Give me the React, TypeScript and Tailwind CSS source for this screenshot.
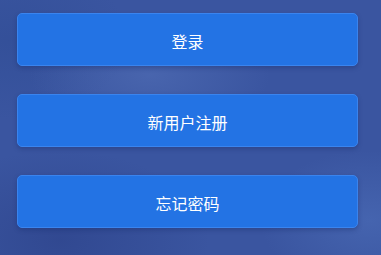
import React from "react";

export default function App() {
  const labels = ["登录", "新用户注册", "忘记密码"];
  return (
    <div className="w-[381px] h-[255px] overflow-hidden flex flex-col gap-[28px] pl-[17px] pr-[23px] pt-[13px] bg-[#3a55a0] bg-[radial-gradient(ellipse_120px_60px_at_150px_75px,rgba(90,120,190,0.45),transparent),radial-gradient(ellipse_110px_70px_at_370px_220px,rgba(80,115,190,0.5),transparent),radial-gradient(ellipse_150px_90px_at_60px_240px,rgba(40,60,130,0.5),transparent),radial-gradient(ellipse_120px_80px_at_10px_40px,rgba(40,70,140,0.35),transparent)]">
      {labels.map((l) => (
        <button
          key={l}
          className="h-[53px] w-full shrink-0 rounded-[5px] bg-[#2373e4] border border-[#3a84ee] shadow-[0_2px_4px_rgba(20,40,100,0.35)] text-white text-[16px] leading-none flex items-center justify-center pt-[2px] font-['Noto_Sans_CJK_SC','Noto_Sans',sans-serif]"
        >
          {l}
        </button>
      ))}
    </div>
  );
}
